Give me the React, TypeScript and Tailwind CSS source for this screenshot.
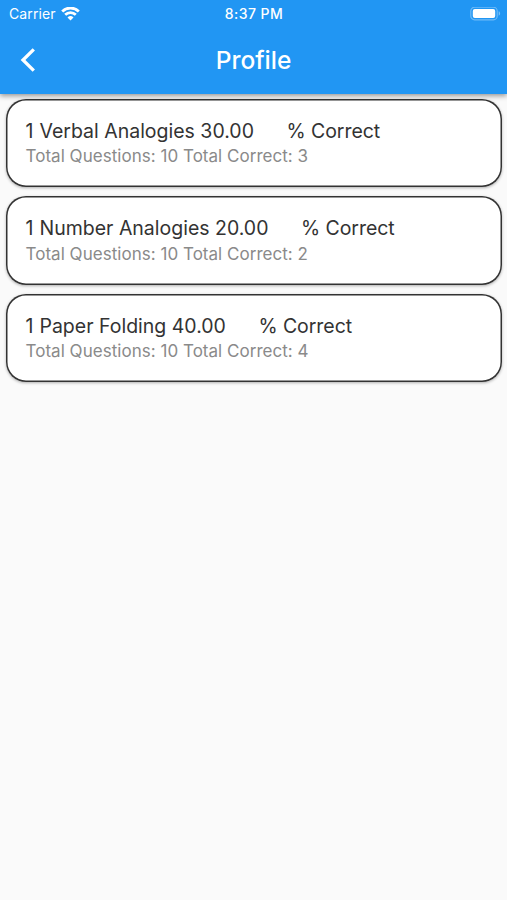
interface Result {
  name: string;
  percent: string;
  questions: number;
  correct: number;
}

const results: Result[] = [
  { name: "Verbal Analogies", percent: "30.00", questions: 10, correct: 3 },
  { name: "Number Analogies", percent: "20.00", questions: 10, correct: 2 },
  { name: "Paper Folding", percent: "40.00", questions: 10, correct: 4 },
];

function WifiIcon() {
  return (
    <svg className="h-[14px] w-[19px]" viewBox="0 0 19 14" fill="none" stroke="currentColor" strokeWidth={2.8}>
      <path d="M1.2 4.4a11.9 11.9 0 0 1 16.6 0" />
      <path d="M4.2 7.7a7.6 7.6 0 0 1 10.6 0" />
      <path d="M9.5 13.4 6.5 10.4a4.3 4.3 0 0 1 6 0Z" fill="currentColor" stroke="none" />
    </svg>
  );
}

function BatteryIcon() {
  return (
    <svg className="h-[14px] w-[31px]" viewBox="0 0 31 14" fill="none">
      <rect x="0.8" y="0.2" width="26.4" height="12.6" rx="3.8" stroke="white" strokeOpacity={0.35} strokeWidth={1.2} />
      <rect x="2.8" y="1.9" width="22.4" height="9.2" rx="2" fill="white" />
      <path d="M28.7 4.3c1.9.7 1.9 3.7 0 4.4Z" fill="white" fillOpacity={0.4} />
    </svg>
  );
}

function StatusBar() {
  return (
    <div className="grid h-[27px] grid-cols-[1fr_auto_1fr] items-center pr-[6px] pl-[7px] text-[14px]">
      <div className="flex items-center gap-[5px] pl-[2px]">
        <span className="tracking-[0.1px]">Carrier</span>
        <WifiIcon />
      </div>
      <span className="text-center text-[14px] font-medium tracking-[0.45px]">8:37 PM</span>
      <div className="flex justify-end">
        <BatteryIcon />
      </div>
    </div>
  );
}

function ResultCard({ result }: { result: Result }) {
  return (
    <div className="h-[88.6px] rounded-[20px] bg-white pt-[19.7px] pl-[19.5px] shadow-[inset_0_0_0_1.5px_#333,0_1px_3px_rgba(0,0,0,0.3)]">
      <div className="flex h-[26px] items-center text-[19.5px] whitespace-pre text-[#333]">
        <span>1</span>
        <span className="ml-[6px]">{`${result.name} ${result.percent}`}</span>
        <span className="ml-[32.5px] tracking-[-0.05px]">% Correct</span>
      </div>
      <div className="flex h-[25px] items-center text-[17px] tracking-[0.03px] text-[#8a8a8a]">
        Total Questions: {result.questions} Total Correct: {result.correct}
      </div>
    </div>
  );
}

export default function App() {
  return (
    <div className="h-[900px] w-[507px] overflow-hidden bg-[#fafafa] font-['Inter',sans-serif]">
      <header className="relative h-[94px] bg-[#2196f3] text-white shadow-[0_2px_5px_rgba(0,0,0,0.4)]">
        <StatusBar />
        <div className="grid h-[66px] grid-cols-3 items-center">
          <button className="ml-[19.5px] w-6" aria-label="Back">
            <svg className="h-6 w-4" viewBox="0 0 16 24" fill="none" stroke="currentColor" strokeWidth={3.3}>
              <path d="M13.8 1.4 3 12l10.8 10.6" />
            </svg>
          </button>
          <h1 className="text-center text-[24.5px] font-medium">Profile</h1>
        </div>
      </header>
      <main className="flex flex-col gap-[9.1px] pt-[4.5px] pr-[5px] pl-[6px]">
        {results.map((result) => (
          <ResultCard key={result.name} result={result} />
        ))}
      </main>
    </div>
  );
}
